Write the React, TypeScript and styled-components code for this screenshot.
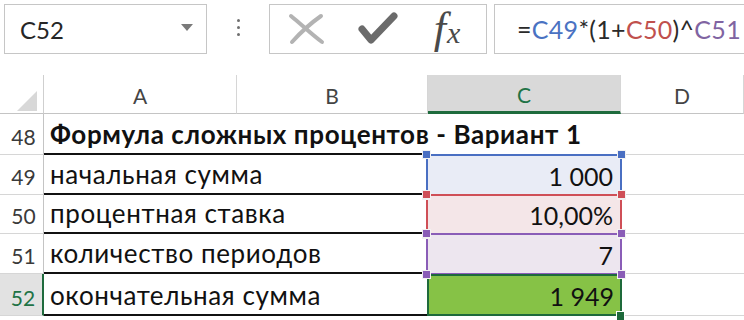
import { Fragment } from "react";
import styled, { createGlobalStyle, css } from "styled-components";

const GlobalStyle = createGlobalStyle`
  html, body {
    margin: 0;
    padding: 0;
    background: #ffffff;
  }
  body {
    font-family: Lato, "Open Sans", "DejaVu Sans", sans-serif;
    color: #1a1a1a;
  }
`;

const Page = styled.div`
  width: 744px;
  height: 320px;
  overflow: hidden;
  background: #ffffff;
`;

const FormulaBar = styled.div`
  display: flex;
  height: 50px;
  padding: 4px 0 0 4px;
`;

const NameBox = styled.div`
  width: 203px;
  box-sizing: border-box;
  border: 1px solid #c6c6c6;
  display: flex;
  align-items: center;
  justify-content: space-between;
  padding: 0 13px 0 15px;
  font-size: 24px;
  color: #262626;
`;

const Caret = styled.span`
  width: 0;
  height: 0;
  margin-bottom: 4px;
  border-left: 6px solid transparent;
  border-right: 6px solid transparent;
  border-top: 7px solid #7a7a7a;
`;

const Grip = styled.div`
  width: 62px;
  display: flex;
  flex-direction: column;
  align-items: center;
  justify-content: center;
  gap: 4px;
  padding-bottom: 4px;
`;

const Dot = styled.span`
  width: 3px;
  height: 3px;
  border-radius: 50%;
  background: #6f6f6f;
`;

const ButtonBox = styled.div`
  width: 218px;
  box-sizing: border-box;
  border: 1px solid #c6c6c6;
  display: grid;
  grid-template-columns: repeat(3, 72px);
  align-items: center;
  justify-items: center;
`;

const Fx = styled.span`
  font-family: "Liberation Serif", "DejaVu Serif", serif;
  font-style: italic;
  color: #4a4a4a;
  font-size: 44px;
  line-height: 1;
  padding-right: 6px;

  & > small {
    font-size: 30px;
    margin-left: 1px;
  }
`;

const FormulaBox = styled.div`
  flex: 1;
  margin-left: 7px;
  box-sizing: border-box;
  border: 1px solid #c6c6c6;
  border-right: none;
  display: flex;
  align-items: center;
  padding-left: 22px;
  font-size: 25px;
  letter-spacing: 0.3px;
  color: #2a2a2a;
  white-space: nowrap;
`;

const Ref = styled.span<{ $color: string }>`
  color: ${({ $color }) => $color};
`;

const Sheet = styled.div`
  margin-top: 21px;
  display: grid;
  grid-template-columns: 44px 193px 191px 193px 123px;
  grid-template-rows: 39px 41px 40px 39px 40px 42px 10px;
`;

const Corner = styled.div`
  box-sizing: border-box;
  border-right: 1px solid #cfcfcf;
  border-bottom: 1px solid #c4c4c4;
  position: relative;

  &::after {
    content: "";
    position: absolute;
    right: 6px;
    bottom: 2px;
    width: 0;
    height: 0;
    border-left: 20px solid transparent;
    border-bottom: 20px solid #d8d8d8;
  }
`;

const ColHead = styled.div<{ $active?: boolean }>`
  box-sizing: border-box;
  border-right: 1px solid #d6d6d6;
  border-bottom: 1px solid #c4c4c4;
  display: flex;
  align-items: center;
  justify-content: center;
  font-size: 21px;
  color: #444;
  padding-top: 2px;

  ${({ $active }) =>
    $active &&
    css`
      background: #d9d9d9;
      color: #217346;
      border-bottom: 3px solid #1f6b3d;
    `}
`;

const RowHead = styled.div<{ $active?: boolean }>`
  box-sizing: border-box;
  border-right: 1px solid #c4c4c4;
  border-bottom: 1px solid #d6d6d6;
  display: flex;
  align-items: flex-end;
  justify-content: center;
  padding: 0 0 5px 4px;
  font-size: 21px;
  color: #3a3a3a;

  ${({ $active }) =>
    $active &&
    css`
      background: #e2e2e2;
      color: #217346;
      border-right: 2px solid #1f6b3d;
    `}
`;

const TextCell = styled.div<{ $bold?: boolean }>`
  grid-column: span 2;
  box-sizing: border-box;
  border-bottom: 2px solid #111;
  display: flex;
  align-items: flex-end;
  padding: 0 0 3px 6px;
  font-size: 26px;
  line-height: 1.15;
  white-space: nowrap;
  color: #111;
  font-weight: ${({ $bold }) => ($bold ? 700 : 400)};
  letter-spacing: ${({ $bold }) => ($bold ? "0.6px" : "0.6px")};
`;

const BlankCell = styled.div<{ $line?: boolean }>`
  box-sizing: border-box;
  border-bottom: ${({ $line }) => ($line ? "1px solid #d6d6d6" : "none")};
`;

const tones = {
  blue: { line: "#4a6fc2", fill: "#e9ecf6" },
  red: { line: "#cf4f57", fill: "#f4e6e8" },
  purple: { line: "#8a5db7", fill: "#ede6ef" },
};

type Tone = keyof typeof tones;

const RangeCell = styled.div<{ $tone: Tone }>`
  position: relative;
  box-sizing: border-box;
  background: ${({ $tone }) => tones[$tone].fill};
  display: flex;
  align-items: flex-end;
  justify-content: flex-end;
  padding: 0 8px 4px 0;
  font-size: 25px;
  line-height: 1.15;
  color: #111;

  &::before {
    content: "";
    position: absolute;
    top: -1px;
    left: -2px;
    right: -1px;
    bottom: -1px;
    border: 2px solid ${({ $tone }) => tones[$tone].line};
  }
`;

const Handle = styled.span<{ $tone: Tone; $x: "l" | "r"; $y: "t" | "b" }>`
  position: absolute;
  z-index: 2;
  width: 7px;
  height: 7px;
  background: ${({ $tone }) => tones[$tone].line};
  border: 1px solid #f2f2f2;
  ${({ $x }) => ($x === "l" ? "left: -6px;" : "right: -5px;")}
  ${({ $y }) => ($y === "t" ? "top: -5px;" : "bottom: -5px;")}
`;

const ActiveCell = styled.div`
  position: relative;
  box-sizing: border-box;
  background: #86c246;
  border: 2px solid #1e6a3b;
  margin: 0 -1px 0 -1px;
  display: flex;
  align-items: flex-end;
  justify-content: flex-end;
  padding: 0 6px 3px 0;
  font-size: 25px;
  line-height: 1.15;
  color: #111;
`;

const FillHandle = styled.span`
  position: absolute;
  z-index: 3;
  right: -5px;
  bottom: -7px;
  width: 7px;
  height: 8px;
  background: #1e6a3b;
  border: 1px solid #ffffff;
`;

const CancelIcon = () => (
  <svg width="38" height="34" viewBox="0 0 38 34">
    <path
      d="M4 4 C 14 12, 24 22, 35 30 M34 4 C 24 11, 14 20, 5 30"
      fill="none"
      stroke="#b3b3b3"
      strokeWidth="4"
      strokeLinecap="round"
    />
  </svg>
);

const EnterIcon = () => (
  <svg width="40" height="34" viewBox="0 0 40 34">
    <path
      d="M4 17 L13 28 L36 4"
      fill="none"
      stroke="#6b6b6b"
      strokeWidth="7"
      strokeLinecap="round"
      strokeLinejoin="round"
    />
  </svg>
);

const RangeHandles = ({ tone }: { tone: Tone }) => (
  <>
    <Handle $tone={tone} $x="l" $y="t" />
    <Handle $tone={tone} $x="r" $y="t" />
    <Handle $tone={tone} $x="l" $y="b" />
    <Handle $tone={tone} $x="r" $y="b" />
  </>
);

const rows: { n: number; label: string; value: string; tone: Tone }[] = [
  { n: 49, label: "начальная сумма", value: "1 000", tone: "blue" },
  { n: 50, label: "процентная ставка", value: "10,00%", tone: "red" },
  { n: 51, label: "количество периодов", value: "7", tone: "purple" },
];

export default function App() {
  return (
    <Page>
      <GlobalStyle />
      <FormulaBar>
        <NameBox>
          C52
          <Caret />
        </NameBox>
        <Grip>
          <Dot />
          <Dot />
          <Dot />
        </Grip>
        <ButtonBox>
          <CancelIcon />
          <EnterIcon />
          <Fx>
            f<small>x</small>
          </Fx>
        </ButtonBox>
        <FormulaBox>
          =<Ref $color="#4a72c2">C49</Ref>*(1+<Ref $color="#c0504d">C50</Ref>)^
          <Ref $color="#8064a2">C51</Ref>
        </FormulaBox>
      </FormulaBar>

      <Sheet>
        <Corner />
        <ColHead>A</ColHead>
        <ColHead>B</ColHead>
        <ColHead $active>C</ColHead>
        <ColHead>D</ColHead>

        <RowHead>48</RowHead>
        <TextCell $bold>Формула сложных процентов - Вариант 1</TextCell>
        <BlankCell />
        <BlankCell $line />

        {rows.map((r) => (
          <Fragment key={r.n}>
            <RowHead>{r.n}</RowHead>
            <TextCell>{r.label}</TextCell>
            <RangeCell $tone={r.tone}>
              {r.value}
              <RangeHandles tone={r.tone} />
            </RangeCell>
            <BlankCell $line />
          </Fragment>
        ))}

        <RowHead $active>52</RowHead>
        <TextCell>окончательная сумма</TextCell>
        <ActiveCell>
          1 949
          <FillHandle />
        </ActiveCell>
        <BlankCell $line />
      </Sheet>
    </Page>
  );
}
